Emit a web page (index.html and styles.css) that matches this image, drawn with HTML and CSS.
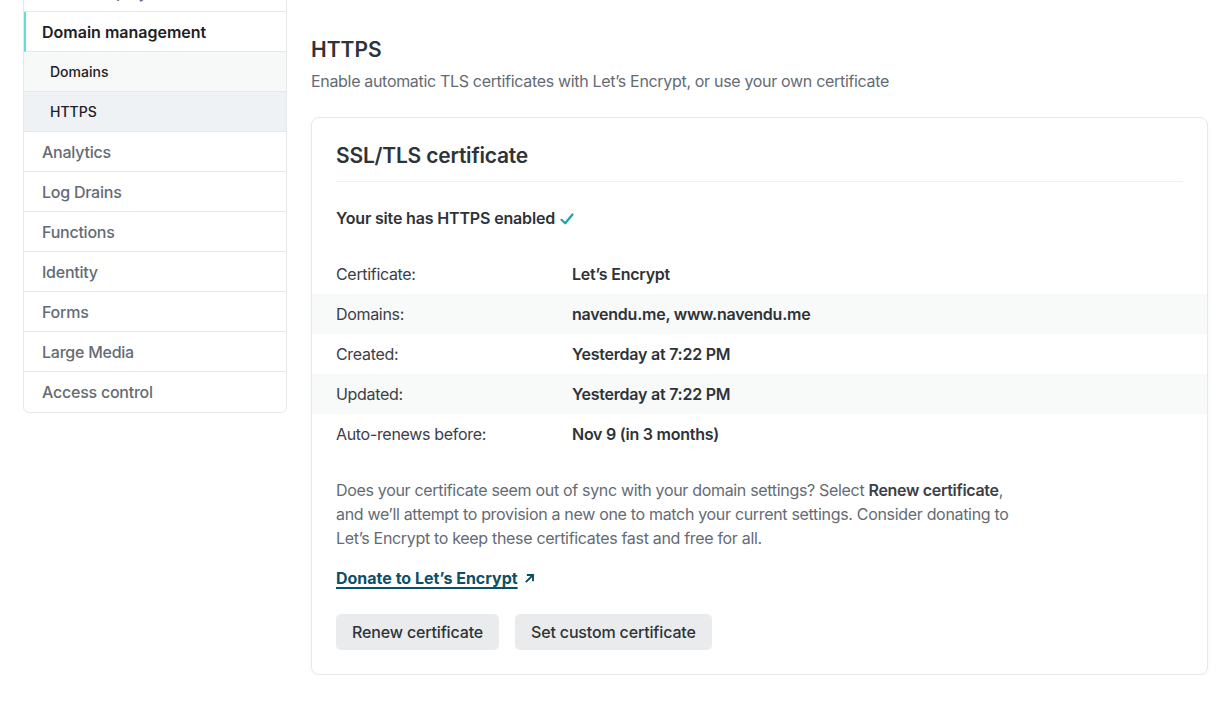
FILE: index.html
```html
<!DOCTYPE html>
<html lang="en">
<head>
<meta charset="utf-8">
<title>HTTPS</title>
<link rel="stylesheet" href="styles.css">
</head>
<body>
<div class="layout">
  <nav class="sidenav">
    <a class="nav-item">Build &amp; deploy</a>
    <a class="nav-item active">Domain management</a>
    <a class="nav-sub">Domains</a>
    <a class="nav-sub current">HTTPS</a>
    <a class="nav-item">Analytics</a>
    <a class="nav-item">Log Drains</a>
    <a class="nav-item">Functions</a>
    <a class="nav-item">Identity</a>
    <a class="nav-item">Forms</a>
    <a class="nav-item">Large Media</a>
    <a class="nav-item last">Access control</a>
  </nav>
  <main class="main">
    <h1 class="page-title">HTTPS</h1>
    <p class="page-sub">Enable automatic TLS certificates with Let’s Encrypt, or use your own certificate</p>
    <section class="card">
      <h2 class="card-title">SSL/TLS certificate</h2>
      <p class="status">Your site has HTTPS enabled <svg class="check" viewBox="0 0 16 16" width="16" height="16"><path d="M2.5 8.8 L6.2 12.3 L13.5 3.5" fill="none" stroke="#1aa3ad" stroke-width="2.2" stroke-linecap="round" stroke-linejoin="round"/></svg></p>
      <dl class="details">
        <div class="row"><dt>Certificate:</dt><dd>Let’s Encrypt</dd></div>
        <div class="row alt"><dt>Domains:</dt><dd>navendu.me, www.navendu.me</dd></div>
        <div class="row"><dt>Created:</dt><dd>Yesterday at 7:22 PM</dd></div>
        <div class="row alt"><dt>Updated:</dt><dd>Yesterday at 7:22 PM</dd></div>
        <div class="row"><dt>Auto-renews before:</dt><dd>Nov 9 (in 3 months)</dd></div>
      </dl>
      <p class="note">Does your certificate seem out of sync with your domain settings? Select <strong>Renew certificate</strong>, and we’ll attempt to provision a new one to match your current settings. Consider donating to Let’s Encrypt to keep these certificates fast and free for all.</p>
      <p class="link-line"><a class="donate">Donate to Let’s Encrypt</a><svg class="ext" viewBox="0 0 12 12" width="12" height="12"><path d="M2.5 9.5 L9 3 M3.8 3 H9 V8.2" fill="none" stroke="#0e4f68" stroke-width="1.9" stroke-linecap="square"/></svg></p>
      <div class="actions">
        <button class="btn">Renew certificate</button>
        <button class="btn">Set custom certificate</button>
      </div>
    </section>
  </main>
</div>
</body>
</html>
```
FILE: styles.css
```css
* { box-sizing: border-box; }
html, body { margin: 0; padding: 0; background: #fff; }
body {
  font-family: Inter, "Noto Sans", sans-serif;
  color: #2e3338;
  font-size: 16px;
  line-height: 24px;
  overflow: hidden;
}
.layout {
  display: flex;
  align-items: flex-start;
  gap: 24px;
  padding: 0 22px 0 23px;
}
.sidenav {
  width: 264px;
  flex: none;
  margin-top: -29px;
  border: 1px solid #e6e8eb;
  border-radius: 6px;
  display: flex;
  flex-direction: column;
  overflow: hidden;
}
.nav-item, .nav-sub {
  display: flex;
  align-items: center;
  height: 40px;
  border-bottom: 1px solid #e6e8eb;
  text-decoration: none;
}
.nav-item {
  padding-left: 18px;
  font-size: 16px;
  color: #646b74;
  font-weight: 500;
  letter-spacing: -0.015em;
}
.nav-item.last { border-bottom: none; }
.nav-item.active {
  color: #1d2125;
  font-weight: 600;
  letter-spacing: 0;
  border-left: 2px solid #5fded6;
  padding-left: 16px;
}
.nav-sub {
  padding-left: 26px;
  font-size: 14px;
  font-weight: 500;
  color: #1d2125;
  background: #f7f8f8;
}
.nav-sub.current { background: #eff2f5; }
.main {
  width: 897px;
  flex: none;
  letter-spacing: -0.02em;
}
.page-title {
  margin: 36px 0 0;
  font-size: 21px;
  line-height: 28px;
  font-weight: 600;
  letter-spacing: 0;
  color: #2e3338;
}
.page-sub {
  margin: 5px 0 0;
  color: #646b74;
  font-size: 16px;
  line-height: 24px;
}
.card {
  margin-top: 24px;
  border: 1px solid #e6e8eb;
  border-radius: 8px;
  box-shadow: 0 2px 4px rgba(0,0,0,0.04);
  padding: 24px 0 24px;
}
.card-title {
  margin: 0 24px;
  padding-bottom: 11px;
  border-bottom: 1px solid #eef0f2;
  font-size: 21px;
  line-height: 28px;
  font-weight: 600;
  letter-spacing: -0.01em;
  color: #2e3338;
}
.status {
  margin: 24px 24px 0;
  font-weight: 600;
  letter-spacing: -0.01em;
  display: flex;
  align-items: center;
  gap: 4px;
}
.check { margin-top: 1px; }
.details { margin: 24px 0 0; }
.row {
  display: flex;
  align-items: center;
  height: 40px;
  padding-left: 24px;
}
.row.alt { background: #f8f9f9; }
.row dt { width: 236px; color: #3b4047; }
.row dd { margin: 0; font-weight: 600; color: #2e3338; letter-spacing: -0.015em; }
.note {
  margin: 24px 24px 0;
  max-width: 690px;
  color: #646b74;
}
.note strong { font-weight: 600; color: #3b4047; }
.link-line {
  margin: 16px 24px 0;
  display: flex;
  align-items: center;
  gap: 6px;
}
.donate {
  color: #0e4f68;
  font-weight: 700;
  letter-spacing: 0;
  text-decoration: underline;
  text-underline-offset: 3px;
  text-decoration-thickness: 1.5px;
}
.actions {
  margin: 24px 24px 0;
  display: flex;
  gap: 16px;
}
.btn {
  height: 36px;
  padding: 0 16px;
  border: none;
  border-radius: 5px;
  background: #e9ebed;
  font-family: inherit;
  font-size: 16px;
  font-weight: 500;
  letter-spacing: -0.01em;
  color: #2e3338;
}
```
